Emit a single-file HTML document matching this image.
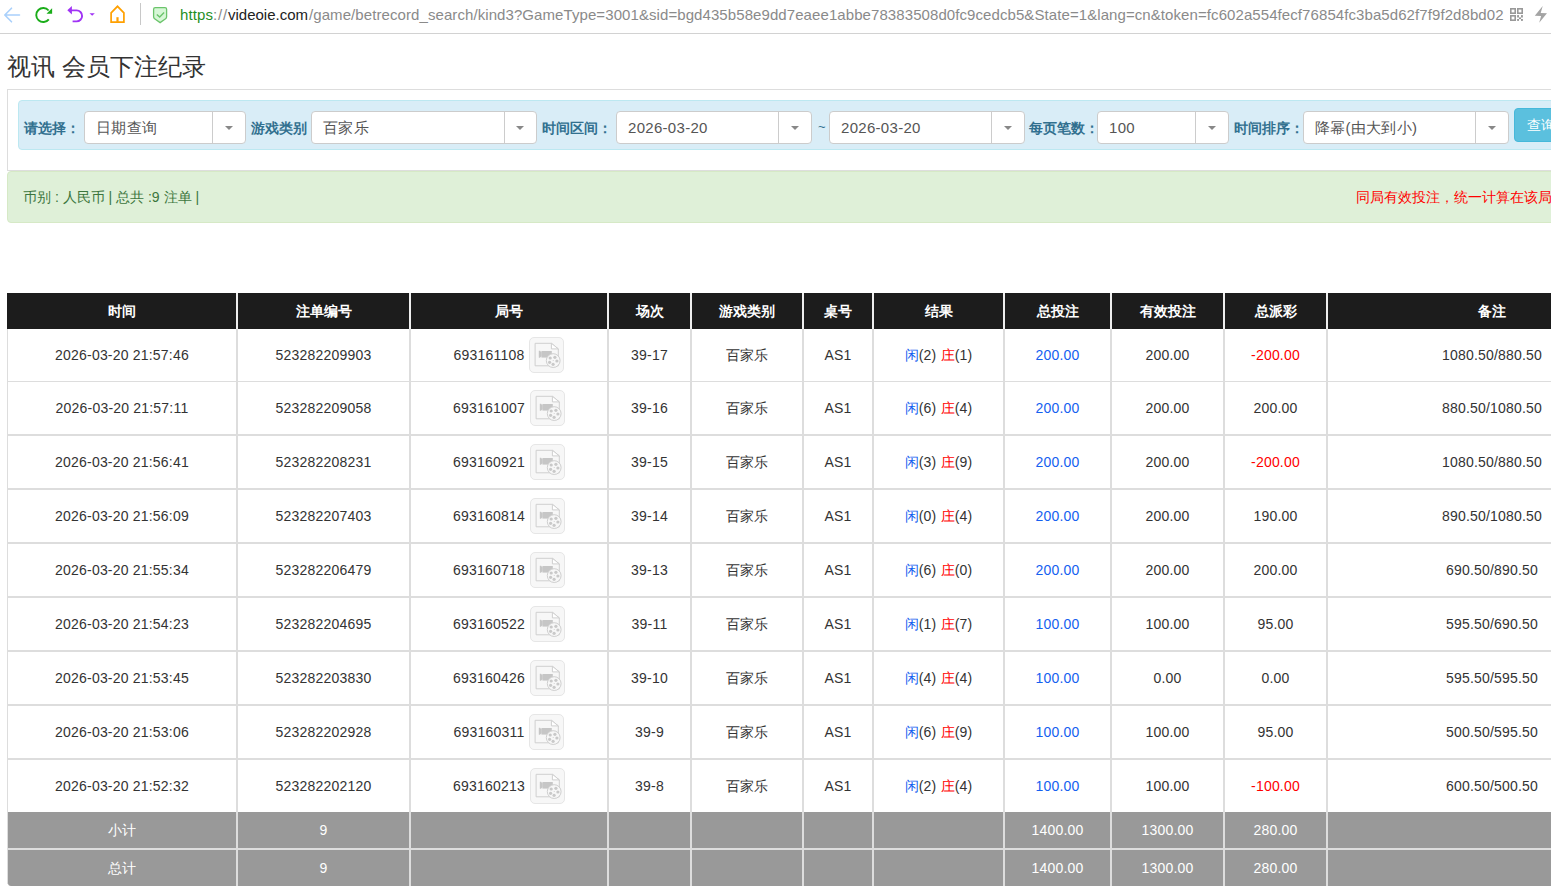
<!DOCTYPE html><html><head><meta charset="utf-8"><title>视讯 会员下注纪录</title><style>
*{margin:0;padding:0;box-sizing:border-box}
html,body{width:1551px;height:889px;overflow:hidden;background:#fff;font-family:"Liberation Sans",sans-serif;color:#333}
.a{position:absolute}
.tb{left:0;top:0;width:1551px;height:33px;background:#fff}
.tbl{left:0;top:33px;width:1551px;height:1px;background:#d2d2d2}
.url{left:180px;top:6px;font-size:15px;letter-spacing:0.1px;white-space:nowrap;color:#8a8a8a;line-height:18px}
.title{left:7px;top:51px;font-size:24px;line-height:32px;color:#333;white-space:nowrap}
.panel{left:7px;top:89px;width:1600px;height:82px;border:1px solid #ddd;border-right:none;background:#fff}
.info{left:18px;top:100px;width:1600px;height:50px;background:#d9edf7;border:1px solid #bce8f1;border-radius:4px}
.lbl{font-size:14px;font-weight:bold;color:#31708f;white-space:nowrap;line-height:16px;top:120px;letter-spacing:0px}
.sel{top:111px;height:33px;background:#fff;border:1px solid #ccc;border-radius:4px}
.sel .tx{position:absolute;left:11px;top:7px;font-size:15px;color:#555;white-space:nowrap;line-height:18px;letter-spacing:0.3px}
.sel .dv{position:absolute;top:0;bottom:0;width:1px;background:#ccc}
.sel .ar{position:absolute;top:14px;width:0;height:0;border-left:4px solid transparent;border-right:4px solid transparent;border-top:4px solid #888}
.btn{left:1514px;top:108px;width:60px;height:34px;background:#5bc0de;border:1px solid #46b8da;border-radius:4px}
.btn .tx{position:absolute;left:12px;top:8px;font-size:14px;color:#fff;white-space:nowrap;line-height:16px}
.ok{left:7px;top:171px;width:1600px;height:52px;background:#dff0d8;border:1px solid #d6e9c6;border-radius:4px}
.oktx{left:23px;top:188px;font-size:14px;color:#3c763d;white-space:nowrap;line-height:18px}
.redtx{left:1356px;top:188px;font-size:14px;color:#f00;white-space:nowrap;line-height:18px}
.th{top:293px;height:36px;background:#1c1c1c}
.tht{top:293px;height:36px;line-height:36px;color:#fff;font-weight:bold;font-size:14px;text-align:center;white-space:nowrap}
.hl{background:#ddd}
.cell{text-align:center;white-space:nowrap;font-size:14px;letter-spacing:0.2px;color:#333}
.blue{color:#1560f0}
.red{color:#f00}
.grey{background:#999}
.gt{color:#fff;font-size:14px;text-align:center;white-space:nowrap;letter-spacing:0.2px}
.vb{display:inline-block;vertical-align:middle;width:35px;height:36px;border:1px solid #e6e6e6;border-radius:5px;background:#f7f7f7;position:relative;margin-left:5px}
.num{display:inline-block;vertical-align:middle}
</style></head><body>
<div class="a tb"></div><div class="a tbl"></div>
<svg class="a" style="left:0;top:0" width="180" height="33" viewBox="0 0 180 33">
<g fill="none" stroke="#a9d0fb" stroke-width="1.6" stroke-linecap="round" stroke-linejoin="round"><path d="M19.5 15H5M11.5 8.2L4.8 15l6.7 6.8"/></g>
<g fill="none" stroke="#1aad19" stroke-width="1.9"><path d="M48.6 10.5A7 7 0 1 0 48.8 19.3"/></g><path d="M52.1 8.2v5.6h-5.6z" fill="#1aad19"/>
<g fill="none" stroke="#a033f5" stroke-width="1.9"><path d="M70 10.4h6.6a5.5 5.5 0 0 1 0 11H72.6"/></g><path d="M67.3 10.3l4.6-4.3v8.6z" fill="#a033f5"/>
<path d="M89.5 13.2h5.3l-2.65 2.6z" fill="#a033f5"/>
<g fill="none" stroke="#ffa000" stroke-width="1.7" stroke-linejoin="miter"><path d="M111.1 22.2V12.8L117.5 6.3l6.4 6.5v9.4z"/></g><path d="M116.4 17.2h2.2v4.6h-2.2z" fill="#ffa000"/>
<rect x="140" y="3" width="1" height="22" fill="#c8c8c8"/>
<path d="M153.6 9.2q0-1.6 1.6-1.6h9.8q1.6 0 1.6 1.6v7.6q0 1.2-1 1.9l-5.5 3.9-5.5-3.9q-1-0.7-1-1.9z" fill="#d7f7d7" stroke="#6bc46b" stroke-width="1.3"/>
<path d="M156.8 14.4l2.9 2.6 4.4-4.5" fill="none" stroke="#6bc46b" stroke-width="1.4"/>
</svg>
<div class="a url" style="left:180px;color:#1f8f1f">https</div><div class="a url" style="left:213px;color:#888;letter-spacing:0.8px">://</div><div class="a url" style="left:228px;color:#222;letter-spacing:0">videoie.com</div><div class="a url" style="left:309px;letter-spacing:0.082px">/game/betrecord_search/kind3?GameType=3001&amp;sid=bgd435b58e9dd7eaee1abbe78383508d0fc9cedcb5&amp;State=1&amp;lang=cn&amp;token=fc602a554fecf76854fc3ba5d62f7f9f2d8bd02</div>
<svg class="a" style="left:1505px;top:0" width="46" height="33" viewBox="1505 0 46 33">
<g fill="none" stroke="#999" stroke-width="1.6"><rect x="1510.8" y="8.8" width="4.4" height="4.4"/><rect x="1517.8" y="8.8" width="4.4" height="4.4"/><rect x="1510.8" y="15.8" width="4.4" height="4.4"/></g>
<g fill="#999"><rect x="1517.1" y="15.1" width="1.9" height="2.4"/><rect x="1521" y="15.1" width="1.9" height="2.4"/><rect x="1519" y="17.4" width="2" height="1.7"/><rect x="1517.1" y="19" width="1.9" height="1.9"/><rect x="1521" y="19" width="1.9" height="1.9"/></g>
<path d="M1542.7 5.9L1534.8 15.7L1541.1 15.9L1539.2 22.8L1547 13.2L1540.7 13Z" fill="#a4a4a4"/>
</svg>
<div class="a title">视讯 会员下注纪录</div>
<div class="a panel"></div><div class="a info"></div>
<div class="a lbl" style="left:24px">请选择：</div>
<div class="a sel" style="left:84px;width:162px"><div class="tx">日期查询</div><div class="dv" style="left:127px"></div><div class="ar" style="left:140px"></div></div>
<div class="a lbl" style="left:251px">游戏类别</div>
<div class="a sel" style="left:311px;width:226px"><div class="tx">百家乐</div><div class="dv" style="left:192px"></div><div class="ar" style="left:204px"></div></div>
<div class="a lbl" style="left:542px">时间区间：</div>
<div class="a sel" style="left:616px;width:196px"><div class="tx">2026-03-20</div><div class="dv" style="left:161px"></div><div class="ar" style="left:174px"></div></div>
<div class="a" style="left:818px;top:119px;font-size:13px;color:#31708f;line-height:16px">~</div>
<div class="a sel" style="left:829px;width:196px"><div class="tx">2026-03-20</div><div class="dv" style="left:161px"></div><div class="ar" style="left:174px"></div></div>
<div class="a lbl" style="left:1029px">每页笔数：</div>
<div class="a sel" style="left:1097px;width:132px"><div class="tx">100</div><div class="dv" style="left:97px"></div><div class="ar" style="left:110px"></div></div>
<div class="a lbl" style="left:1234px">时间排序：</div>
<div class="a sel" style="left:1303px;width:206px"><div class="tx">降幂(由大到小)</div><div class="dv" style="left:171px"></div><div class="ar" style="left:184px"></div></div>
<div class="a btn"><div class="tx">查询</div></div>
<div class="a ok"></div>
<div class="a oktx">币别 : 人民币 | 总共 :9 注单 |</div>
<div class="a redtx">同局有效投注，统一计算在该局</div>
<div class="a th" style="left:7px;width:1649px"></div>
<div class="a" style="left:236px;top:293px;width:2px;height:36px;background:#eee"></div>
<div class="a" style="left:409px;top:293px;width:2px;height:36px;background:#eee"></div>
<div class="a" style="left:607px;top:293px;width:2px;height:36px;background:#eee"></div>
<div class="a" style="left:690px;top:293px;width:2px;height:36px;background:#eee"></div>
<div class="a" style="left:802px;top:293px;width:2px;height:36px;background:#eee"></div>
<div class="a" style="left:872px;top:293px;width:2px;height:36px;background:#eee"></div>
<div class="a" style="left:1003px;top:293px;width:2px;height:36px;background:#eee"></div>
<div class="a" style="left:1110px;top:293px;width:2px;height:36px;background:#eee"></div>
<div class="a" style="left:1223px;top:293px;width:2px;height:36px;background:#eee"></div>
<div class="a" style="left:1326px;top:293px;width:2px;height:36px;background:#eee"></div>
<div class="a tht" style="left:8px;width:228px">时间</div>
<div class="a tht" style="left:238px;width:171px">注单编号</div>
<div class="a tht" style="left:411px;width:196px">局号</div>
<div class="a tht" style="left:609px;width:81px">场次</div>
<div class="a tht" style="left:692px;width:110px">游戏类别</div>
<div class="a tht" style="left:804px;width:68px">桌号</div>
<div class="a tht" style="left:874px;width:129px">结果</div>
<div class="a tht" style="left:1005px;width:105px">总投注</div>
<div class="a tht" style="left:1112px;width:111px">有效投注</div>
<div class="a tht" style="left:1225px;width:101px">总派彩</div>
<div class="a tht" style="left:1328px;width:328px">备注</div>
<div class="a hl" style="left:7px;top:329px;width:1px;height:555px"></div>
<div class="a hl" style="left:236px;top:329px;width:2px;height:557px"></div>
<div class="a hl" style="left:409px;top:329px;width:2px;height:557px"></div>
<div class="a hl" style="left:607px;top:329px;width:2px;height:557px"></div>
<div class="a hl" style="left:690px;top:329px;width:2px;height:557px"></div>
<div class="a hl" style="left:802px;top:329px;width:2px;height:557px"></div>
<div class="a hl" style="left:872px;top:329px;width:2px;height:557px"></div>
<div class="a hl" style="left:1003px;top:329px;width:2px;height:557px"></div>
<div class="a hl" style="left:1110px;top:329px;width:2px;height:557px"></div>
<div class="a hl" style="left:1223px;top:329px;width:2px;height:557px"></div>
<div class="a hl" style="left:1326px;top:329px;width:2px;height:557px"></div>
<div class="a hl" style="left:7px;top:381px;width:1649px;height:1px"></div>
<div class="a hl" style="left:7px;top:434px;width:1649px;height:2px"></div>
<div class="a hl" style="left:7px;top:488px;width:1649px;height:2px"></div>
<div class="a hl" style="left:7px;top:542px;width:1649px;height:2px"></div>
<div class="a hl" style="left:7px;top:596px;width:1649px;height:2px"></div>
<div class="a hl" style="left:7px;top:650px;width:1649px;height:2px"></div>
<div class="a hl" style="left:7px;top:704px;width:1649px;height:2px"></div>
<div class="a hl" style="left:7px;top:758px;width:1649px;height:2px"></div>
<div class="a cell" style="left:8px;top:329px;width:228px;height:52px;line-height:52px">2026-03-20 21:57:46</div>
<div class="a cell" style="left:238px;top:329px;width:171px;height:52px;line-height:52px">523282209903</div>
<div class="a cell" style="left:411px;top:329px;width:196px;height:52px;display:flex;align-items:center;justify-content:center"><span class="num">693161108</span><span class="vb"><svg width="35" height="36" viewBox="0 0 35 36" style="position:absolute;left:-1px;top:-1px"><path d="M6.1 6.3h16.3l6.9 5.6v16.9H6.1z" fill="#f7f7f7" stroke="#cfcfcf" stroke-width="1"/><path d="M22.4 6.3v5.6h6.9z" fill="#fff" stroke="#cfcfcf" stroke-width="1" stroke-linejoin="round"/><path d="M12.4 14h10.4v6.6H12.4z" fill="#c6c6c6"/><path d="M9.8 13.8h1.2l1.6 1.6v3.6l-1.6 1.8H9.8z" fill="#c6c6c6"/><circle cx="24.2" cy="23.6" r="6.9" fill="#f7f7f7" stroke="#cfcfcf" stroke-width="1"/><g fill="#c9c9c9"><circle cx="21.2" cy="21" r="1.6"/><circle cx="25.9" cy="20.3" r="1.6"/><circle cx="27.9" cy="24" r="1.6"/><circle cx="24.1" cy="27.3" r="1.6"/><circle cx="20.6" cy="25.3" r="1.6"/><circle cx="24.2" cy="23.6" r="0.5"/></g></svg></span></div>
<div class="a cell" style="left:609px;top:329px;width:81px;height:52px;line-height:52px">39-17</div>
<div class="a cell" style="left:692px;top:329px;width:110px;height:52px;line-height:52px">百家乐</div>
<div class="a cell" style="left:804px;top:329px;width:68px;height:52px;line-height:52px">AS1</div>
<div class="a cell" style="left:874px;top:329px;width:129px;height:52px;line-height:52px"><span class="blue">闲</span>(2) <span class="red">庄</span>(1)</div>
<div class="a cell" style="left:1005px;top:329px;width:105px;height:52px;line-height:52px"><span class="blue">200.00</span></div>
<div class="a cell" style="left:1112px;top:329px;width:111px;height:52px;line-height:52px">200.00</div>
<div class="a cell" style="left:1225px;top:329px;width:101px;height:52px;line-height:52px"><span class="red">-200.00</span></div>
<div class="a cell" style="left:1328px;top:329px;width:328px;height:52px;line-height:52px">1080.50/880.50</div>
<div class="a cell" style="left:8px;top:382px;width:228px;height:52px;line-height:52px">2026-03-20 21:57:11</div>
<div class="a cell" style="left:238px;top:382px;width:171px;height:52px;line-height:52px">523282209058</div>
<div class="a cell" style="left:411px;top:382px;width:196px;height:52px;display:flex;align-items:center;justify-content:center"><span class="num">693161007</span><span class="vb"><svg width="35" height="36" viewBox="0 0 35 36" style="position:absolute;left:-1px;top:-1px"><path d="M6.1 6.3h16.3l6.9 5.6v16.9H6.1z" fill="#f7f7f7" stroke="#cfcfcf" stroke-width="1"/><path d="M22.4 6.3v5.6h6.9z" fill="#fff" stroke="#cfcfcf" stroke-width="1" stroke-linejoin="round"/><path d="M12.4 14h10.4v6.6H12.4z" fill="#c6c6c6"/><path d="M9.8 13.8h1.2l1.6 1.6v3.6l-1.6 1.8H9.8z" fill="#c6c6c6"/><circle cx="24.2" cy="23.6" r="6.9" fill="#f7f7f7" stroke="#cfcfcf" stroke-width="1"/><g fill="#c9c9c9"><circle cx="21.2" cy="21" r="1.6"/><circle cx="25.9" cy="20.3" r="1.6"/><circle cx="27.9" cy="24" r="1.6"/><circle cx="24.1" cy="27.3" r="1.6"/><circle cx="20.6" cy="25.3" r="1.6"/><circle cx="24.2" cy="23.6" r="0.5"/></g></svg></span></div>
<div class="a cell" style="left:609px;top:382px;width:81px;height:52px;line-height:52px">39-16</div>
<div class="a cell" style="left:692px;top:382px;width:110px;height:52px;line-height:52px">百家乐</div>
<div class="a cell" style="left:804px;top:382px;width:68px;height:52px;line-height:52px">AS1</div>
<div class="a cell" style="left:874px;top:382px;width:129px;height:52px;line-height:52px"><span class="blue">闲</span>(6) <span class="red">庄</span>(4)</div>
<div class="a cell" style="left:1005px;top:382px;width:105px;height:52px;line-height:52px"><span class="blue">200.00</span></div>
<div class="a cell" style="left:1112px;top:382px;width:111px;height:52px;line-height:52px">200.00</div>
<div class="a cell" style="left:1225px;top:382px;width:101px;height:52px;line-height:52px"><span class="">200.00</span></div>
<div class="a cell" style="left:1328px;top:382px;width:328px;height:52px;line-height:52px">880.50/1080.50</div>
<div class="a cell" style="left:8px;top:436px;width:228px;height:52px;line-height:52px">2026-03-20 21:56:41</div>
<div class="a cell" style="left:238px;top:436px;width:171px;height:52px;line-height:52px">523282208231</div>
<div class="a cell" style="left:411px;top:436px;width:196px;height:52px;display:flex;align-items:center;justify-content:center"><span class="num">693160921</span><span class="vb"><svg width="35" height="36" viewBox="0 0 35 36" style="position:absolute;left:-1px;top:-1px"><path d="M6.1 6.3h16.3l6.9 5.6v16.9H6.1z" fill="#f7f7f7" stroke="#cfcfcf" stroke-width="1"/><path d="M22.4 6.3v5.6h6.9z" fill="#fff" stroke="#cfcfcf" stroke-width="1" stroke-linejoin="round"/><path d="M12.4 14h10.4v6.6H12.4z" fill="#c6c6c6"/><path d="M9.8 13.8h1.2l1.6 1.6v3.6l-1.6 1.8H9.8z" fill="#c6c6c6"/><circle cx="24.2" cy="23.6" r="6.9" fill="#f7f7f7" stroke="#cfcfcf" stroke-width="1"/><g fill="#c9c9c9"><circle cx="21.2" cy="21" r="1.6"/><circle cx="25.9" cy="20.3" r="1.6"/><circle cx="27.9" cy="24" r="1.6"/><circle cx="24.1" cy="27.3" r="1.6"/><circle cx="20.6" cy="25.3" r="1.6"/><circle cx="24.2" cy="23.6" r="0.5"/></g></svg></span></div>
<div class="a cell" style="left:609px;top:436px;width:81px;height:52px;line-height:52px">39-15</div>
<div class="a cell" style="left:692px;top:436px;width:110px;height:52px;line-height:52px">百家乐</div>
<div class="a cell" style="left:804px;top:436px;width:68px;height:52px;line-height:52px">AS1</div>
<div class="a cell" style="left:874px;top:436px;width:129px;height:52px;line-height:52px"><span class="blue">闲</span>(3) <span class="red">庄</span>(9)</div>
<div class="a cell" style="left:1005px;top:436px;width:105px;height:52px;line-height:52px"><span class="blue">200.00</span></div>
<div class="a cell" style="left:1112px;top:436px;width:111px;height:52px;line-height:52px">200.00</div>
<div class="a cell" style="left:1225px;top:436px;width:101px;height:52px;line-height:52px"><span class="red">-200.00</span></div>
<div class="a cell" style="left:1328px;top:436px;width:328px;height:52px;line-height:52px">1080.50/880.50</div>
<div class="a cell" style="left:8px;top:490px;width:228px;height:52px;line-height:52px">2026-03-20 21:56:09</div>
<div class="a cell" style="left:238px;top:490px;width:171px;height:52px;line-height:52px">523282207403</div>
<div class="a cell" style="left:411px;top:490px;width:196px;height:52px;display:flex;align-items:center;justify-content:center"><span class="num">693160814</span><span class="vb"><svg width="35" height="36" viewBox="0 0 35 36" style="position:absolute;left:-1px;top:-1px"><path d="M6.1 6.3h16.3l6.9 5.6v16.9H6.1z" fill="#f7f7f7" stroke="#cfcfcf" stroke-width="1"/><path d="M22.4 6.3v5.6h6.9z" fill="#fff" stroke="#cfcfcf" stroke-width="1" stroke-linejoin="round"/><path d="M12.4 14h10.4v6.6H12.4z" fill="#c6c6c6"/><path d="M9.8 13.8h1.2l1.6 1.6v3.6l-1.6 1.8H9.8z" fill="#c6c6c6"/><circle cx="24.2" cy="23.6" r="6.9" fill="#f7f7f7" stroke="#cfcfcf" stroke-width="1"/><g fill="#c9c9c9"><circle cx="21.2" cy="21" r="1.6"/><circle cx="25.9" cy="20.3" r="1.6"/><circle cx="27.9" cy="24" r="1.6"/><circle cx="24.1" cy="27.3" r="1.6"/><circle cx="20.6" cy="25.3" r="1.6"/><circle cx="24.2" cy="23.6" r="0.5"/></g></svg></span></div>
<div class="a cell" style="left:609px;top:490px;width:81px;height:52px;line-height:52px">39-14</div>
<div class="a cell" style="left:692px;top:490px;width:110px;height:52px;line-height:52px">百家乐</div>
<div class="a cell" style="left:804px;top:490px;width:68px;height:52px;line-height:52px">AS1</div>
<div class="a cell" style="left:874px;top:490px;width:129px;height:52px;line-height:52px"><span class="blue">闲</span>(0) <span class="red">庄</span>(4)</div>
<div class="a cell" style="left:1005px;top:490px;width:105px;height:52px;line-height:52px"><span class="blue">200.00</span></div>
<div class="a cell" style="left:1112px;top:490px;width:111px;height:52px;line-height:52px">200.00</div>
<div class="a cell" style="left:1225px;top:490px;width:101px;height:52px;line-height:52px"><span class="">190.00</span></div>
<div class="a cell" style="left:1328px;top:490px;width:328px;height:52px;line-height:52px">890.50/1080.50</div>
<div class="a cell" style="left:8px;top:544px;width:228px;height:52px;line-height:52px">2026-03-20 21:55:34</div>
<div class="a cell" style="left:238px;top:544px;width:171px;height:52px;line-height:52px">523282206479</div>
<div class="a cell" style="left:411px;top:544px;width:196px;height:52px;display:flex;align-items:center;justify-content:center"><span class="num">693160718</span><span class="vb"><svg width="35" height="36" viewBox="0 0 35 36" style="position:absolute;left:-1px;top:-1px"><path d="M6.1 6.3h16.3l6.9 5.6v16.9H6.1z" fill="#f7f7f7" stroke="#cfcfcf" stroke-width="1"/><path d="M22.4 6.3v5.6h6.9z" fill="#fff" stroke="#cfcfcf" stroke-width="1" stroke-linejoin="round"/><path d="M12.4 14h10.4v6.6H12.4z" fill="#c6c6c6"/><path d="M9.8 13.8h1.2l1.6 1.6v3.6l-1.6 1.8H9.8z" fill="#c6c6c6"/><circle cx="24.2" cy="23.6" r="6.9" fill="#f7f7f7" stroke="#cfcfcf" stroke-width="1"/><g fill="#c9c9c9"><circle cx="21.2" cy="21" r="1.6"/><circle cx="25.9" cy="20.3" r="1.6"/><circle cx="27.9" cy="24" r="1.6"/><circle cx="24.1" cy="27.3" r="1.6"/><circle cx="20.6" cy="25.3" r="1.6"/><circle cx="24.2" cy="23.6" r="0.5"/></g></svg></span></div>
<div class="a cell" style="left:609px;top:544px;width:81px;height:52px;line-height:52px">39-13</div>
<div class="a cell" style="left:692px;top:544px;width:110px;height:52px;line-height:52px">百家乐</div>
<div class="a cell" style="left:804px;top:544px;width:68px;height:52px;line-height:52px">AS1</div>
<div class="a cell" style="left:874px;top:544px;width:129px;height:52px;line-height:52px"><span class="blue">闲</span>(6) <span class="red">庄</span>(0)</div>
<div class="a cell" style="left:1005px;top:544px;width:105px;height:52px;line-height:52px"><span class="blue">200.00</span></div>
<div class="a cell" style="left:1112px;top:544px;width:111px;height:52px;line-height:52px">200.00</div>
<div class="a cell" style="left:1225px;top:544px;width:101px;height:52px;line-height:52px"><span class="">200.00</span></div>
<div class="a cell" style="left:1328px;top:544px;width:328px;height:52px;line-height:52px">690.50/890.50</div>
<div class="a cell" style="left:8px;top:598px;width:228px;height:52px;line-height:52px">2026-03-20 21:54:23</div>
<div class="a cell" style="left:238px;top:598px;width:171px;height:52px;line-height:52px">523282204695</div>
<div class="a cell" style="left:411px;top:598px;width:196px;height:52px;display:flex;align-items:center;justify-content:center"><span class="num">693160522</span><span class="vb"><svg width="35" height="36" viewBox="0 0 35 36" style="position:absolute;left:-1px;top:-1px"><path d="M6.1 6.3h16.3l6.9 5.6v16.9H6.1z" fill="#f7f7f7" stroke="#cfcfcf" stroke-width="1"/><path d="M22.4 6.3v5.6h6.9z" fill="#fff" stroke="#cfcfcf" stroke-width="1" stroke-linejoin="round"/><path d="M12.4 14h10.4v6.6H12.4z" fill="#c6c6c6"/><path d="M9.8 13.8h1.2l1.6 1.6v3.6l-1.6 1.8H9.8z" fill="#c6c6c6"/><circle cx="24.2" cy="23.6" r="6.9" fill="#f7f7f7" stroke="#cfcfcf" stroke-width="1"/><g fill="#c9c9c9"><circle cx="21.2" cy="21" r="1.6"/><circle cx="25.9" cy="20.3" r="1.6"/><circle cx="27.9" cy="24" r="1.6"/><circle cx="24.1" cy="27.3" r="1.6"/><circle cx="20.6" cy="25.3" r="1.6"/><circle cx="24.2" cy="23.6" r="0.5"/></g></svg></span></div>
<div class="a cell" style="left:609px;top:598px;width:81px;height:52px;line-height:52px">39-11</div>
<div class="a cell" style="left:692px;top:598px;width:110px;height:52px;line-height:52px">百家乐</div>
<div class="a cell" style="left:804px;top:598px;width:68px;height:52px;line-height:52px">AS1</div>
<div class="a cell" style="left:874px;top:598px;width:129px;height:52px;line-height:52px"><span class="blue">闲</span>(1) <span class="red">庄</span>(7)</div>
<div class="a cell" style="left:1005px;top:598px;width:105px;height:52px;line-height:52px"><span class="blue">100.00</span></div>
<div class="a cell" style="left:1112px;top:598px;width:111px;height:52px;line-height:52px">100.00</div>
<div class="a cell" style="left:1225px;top:598px;width:101px;height:52px;line-height:52px"><span class="">95.00</span></div>
<div class="a cell" style="left:1328px;top:598px;width:328px;height:52px;line-height:52px">595.50/690.50</div>
<div class="a cell" style="left:8px;top:652px;width:228px;height:52px;line-height:52px">2026-03-20 21:53:45</div>
<div class="a cell" style="left:238px;top:652px;width:171px;height:52px;line-height:52px">523282203830</div>
<div class="a cell" style="left:411px;top:652px;width:196px;height:52px;display:flex;align-items:center;justify-content:center"><span class="num">693160426</span><span class="vb"><svg width="35" height="36" viewBox="0 0 35 36" style="position:absolute;left:-1px;top:-1px"><path d="M6.1 6.3h16.3l6.9 5.6v16.9H6.1z" fill="#f7f7f7" stroke="#cfcfcf" stroke-width="1"/><path d="M22.4 6.3v5.6h6.9z" fill="#fff" stroke="#cfcfcf" stroke-width="1" stroke-linejoin="round"/><path d="M12.4 14h10.4v6.6H12.4z" fill="#c6c6c6"/><path d="M9.8 13.8h1.2l1.6 1.6v3.6l-1.6 1.8H9.8z" fill="#c6c6c6"/><circle cx="24.2" cy="23.6" r="6.9" fill="#f7f7f7" stroke="#cfcfcf" stroke-width="1"/><g fill="#c9c9c9"><circle cx="21.2" cy="21" r="1.6"/><circle cx="25.9" cy="20.3" r="1.6"/><circle cx="27.9" cy="24" r="1.6"/><circle cx="24.1" cy="27.3" r="1.6"/><circle cx="20.6" cy="25.3" r="1.6"/><circle cx="24.2" cy="23.6" r="0.5"/></g></svg></span></div>
<div class="a cell" style="left:609px;top:652px;width:81px;height:52px;line-height:52px">39-10</div>
<div class="a cell" style="left:692px;top:652px;width:110px;height:52px;line-height:52px">百家乐</div>
<div class="a cell" style="left:804px;top:652px;width:68px;height:52px;line-height:52px">AS1</div>
<div class="a cell" style="left:874px;top:652px;width:129px;height:52px;line-height:52px"><span class="blue">闲</span>(4) <span class="red">庄</span>(4)</div>
<div class="a cell" style="left:1005px;top:652px;width:105px;height:52px;line-height:52px"><span class="blue">100.00</span></div>
<div class="a cell" style="left:1112px;top:652px;width:111px;height:52px;line-height:52px">0.00</div>
<div class="a cell" style="left:1225px;top:652px;width:101px;height:52px;line-height:52px"><span class="">0.00</span></div>
<div class="a cell" style="left:1328px;top:652px;width:328px;height:52px;line-height:52px">595.50/595.50</div>
<div class="a cell" style="left:8px;top:706px;width:228px;height:52px;line-height:52px">2026-03-20 21:53:06</div>
<div class="a cell" style="left:238px;top:706px;width:171px;height:52px;line-height:52px">523282202928</div>
<div class="a cell" style="left:411px;top:706px;width:196px;height:52px;display:flex;align-items:center;justify-content:center"><span class="num">693160311</span><span class="vb"><svg width="35" height="36" viewBox="0 0 35 36" style="position:absolute;left:-1px;top:-1px"><path d="M6.1 6.3h16.3l6.9 5.6v16.9H6.1z" fill="#f7f7f7" stroke="#cfcfcf" stroke-width="1"/><path d="M22.4 6.3v5.6h6.9z" fill="#fff" stroke="#cfcfcf" stroke-width="1" stroke-linejoin="round"/><path d="M12.4 14h10.4v6.6H12.4z" fill="#c6c6c6"/><path d="M9.8 13.8h1.2l1.6 1.6v3.6l-1.6 1.8H9.8z" fill="#c6c6c6"/><circle cx="24.2" cy="23.6" r="6.9" fill="#f7f7f7" stroke="#cfcfcf" stroke-width="1"/><g fill="#c9c9c9"><circle cx="21.2" cy="21" r="1.6"/><circle cx="25.9" cy="20.3" r="1.6"/><circle cx="27.9" cy="24" r="1.6"/><circle cx="24.1" cy="27.3" r="1.6"/><circle cx="20.6" cy="25.3" r="1.6"/><circle cx="24.2" cy="23.6" r="0.5"/></g></svg></span></div>
<div class="a cell" style="left:609px;top:706px;width:81px;height:52px;line-height:52px">39-9</div>
<div class="a cell" style="left:692px;top:706px;width:110px;height:52px;line-height:52px">百家乐</div>
<div class="a cell" style="left:804px;top:706px;width:68px;height:52px;line-height:52px">AS1</div>
<div class="a cell" style="left:874px;top:706px;width:129px;height:52px;line-height:52px"><span class="blue">闲</span>(6) <span class="red">庄</span>(9)</div>
<div class="a cell" style="left:1005px;top:706px;width:105px;height:52px;line-height:52px"><span class="blue">100.00</span></div>
<div class="a cell" style="left:1112px;top:706px;width:111px;height:52px;line-height:52px">100.00</div>
<div class="a cell" style="left:1225px;top:706px;width:101px;height:52px;line-height:52px"><span class="">95.00</span></div>
<div class="a cell" style="left:1328px;top:706px;width:328px;height:52px;line-height:52px">500.50/595.50</div>
<div class="a cell" style="left:8px;top:760px;width:228px;height:52px;line-height:52px">2026-03-20 21:52:32</div>
<div class="a cell" style="left:238px;top:760px;width:171px;height:52px;line-height:52px">523282202120</div>
<div class="a cell" style="left:411px;top:760px;width:196px;height:52px;display:flex;align-items:center;justify-content:center"><span class="num">693160213</span><span class="vb"><svg width="35" height="36" viewBox="0 0 35 36" style="position:absolute;left:-1px;top:-1px"><path d="M6.1 6.3h16.3l6.9 5.6v16.9H6.1z" fill="#f7f7f7" stroke="#cfcfcf" stroke-width="1"/><path d="M22.4 6.3v5.6h6.9z" fill="#fff" stroke="#cfcfcf" stroke-width="1" stroke-linejoin="round"/><path d="M12.4 14h10.4v6.6H12.4z" fill="#c6c6c6"/><path d="M9.8 13.8h1.2l1.6 1.6v3.6l-1.6 1.8H9.8z" fill="#c6c6c6"/><circle cx="24.2" cy="23.6" r="6.9" fill="#f7f7f7" stroke="#cfcfcf" stroke-width="1"/><g fill="#c9c9c9"><circle cx="21.2" cy="21" r="1.6"/><circle cx="25.9" cy="20.3" r="1.6"/><circle cx="27.9" cy="24" r="1.6"/><circle cx="24.1" cy="27.3" r="1.6"/><circle cx="20.6" cy="25.3" r="1.6"/><circle cx="24.2" cy="23.6" r="0.5"/></g></svg></span></div>
<div class="a cell" style="left:609px;top:760px;width:81px;height:52px;line-height:52px">39-8</div>
<div class="a cell" style="left:692px;top:760px;width:110px;height:52px;line-height:52px">百家乐</div>
<div class="a cell" style="left:804px;top:760px;width:68px;height:52px;line-height:52px">AS1</div>
<div class="a cell" style="left:874px;top:760px;width:129px;height:52px;line-height:52px"><span class="blue">闲</span>(2) <span class="red">庄</span>(4)</div>
<div class="a cell" style="left:1005px;top:760px;width:105px;height:52px;line-height:52px"><span class="blue">100.00</span></div>
<div class="a cell" style="left:1112px;top:760px;width:111px;height:52px;line-height:52px">100.00</div>
<div class="a cell" style="left:1225px;top:760px;width:101px;height:52px;line-height:52px"><span class="red">-100.00</span></div>
<div class="a cell" style="left:1328px;top:760px;width:328px;height:52px;line-height:52px">600.50/500.50</div>
<div class="a grey" style="left:8px;top:812px;width:1648px;height:36px;"></div>
<div class="a grey" style="left:8px;top:850px;width:1648px;height:36px;border-bottom-left-radius:3px;"></div>
<div class="a" style="left:7px;top:848px;width:1649px;height:2px;background:#ddd"></div>
<div class="a" style="left:236px;top:812px;width:2px;height:74px;background:#ddd"></div>
<div class="a" style="left:409px;top:812px;width:2px;height:74px;background:#ddd"></div>
<div class="a" style="left:607px;top:812px;width:2px;height:74px;background:#ddd"></div>
<div class="a" style="left:690px;top:812px;width:2px;height:74px;background:#ddd"></div>
<div class="a" style="left:802px;top:812px;width:2px;height:74px;background:#ddd"></div>
<div class="a" style="left:872px;top:812px;width:2px;height:74px;background:#ddd"></div>
<div class="a" style="left:1003px;top:812px;width:2px;height:74px;background:#ddd"></div>
<div class="a" style="left:1110px;top:812px;width:2px;height:74px;background:#ddd"></div>
<div class="a" style="left:1223px;top:812px;width:2px;height:74px;background:#ddd"></div>
<div class="a" style="left:1326px;top:812px;width:2px;height:74px;background:#ddd"></div>
<div class="a gt" style="left:8px;top:812px;width:228px;height:36px;line-height:36px">小计</div>
<div class="a gt" style="left:238px;top:812px;width:171px;height:36px;line-height:36px">9</div>
<div class="a gt" style="left:1005px;top:812px;width:105px;height:36px;line-height:36px">1400.00</div>
<div class="a gt" style="left:1112px;top:812px;width:111px;height:36px;line-height:36px">1300.00</div>
<div class="a gt" style="left:1225px;top:812px;width:101px;height:36px;line-height:36px">280.00</div>
<div class="a gt" style="left:8px;top:850px;width:228px;height:36px;line-height:36px">总计</div>
<div class="a gt" style="left:238px;top:850px;width:171px;height:36px;line-height:36px">9</div>
<div class="a gt" style="left:1005px;top:850px;width:105px;height:36px;line-height:36px">1400.00</div>
<div class="a gt" style="left:1112px;top:850px;width:111px;height:36px;line-height:36px">1300.00</div>
<div class="a gt" style="left:1225px;top:850px;width:101px;height:36px;line-height:36px">280.00</div>
</body></html>
